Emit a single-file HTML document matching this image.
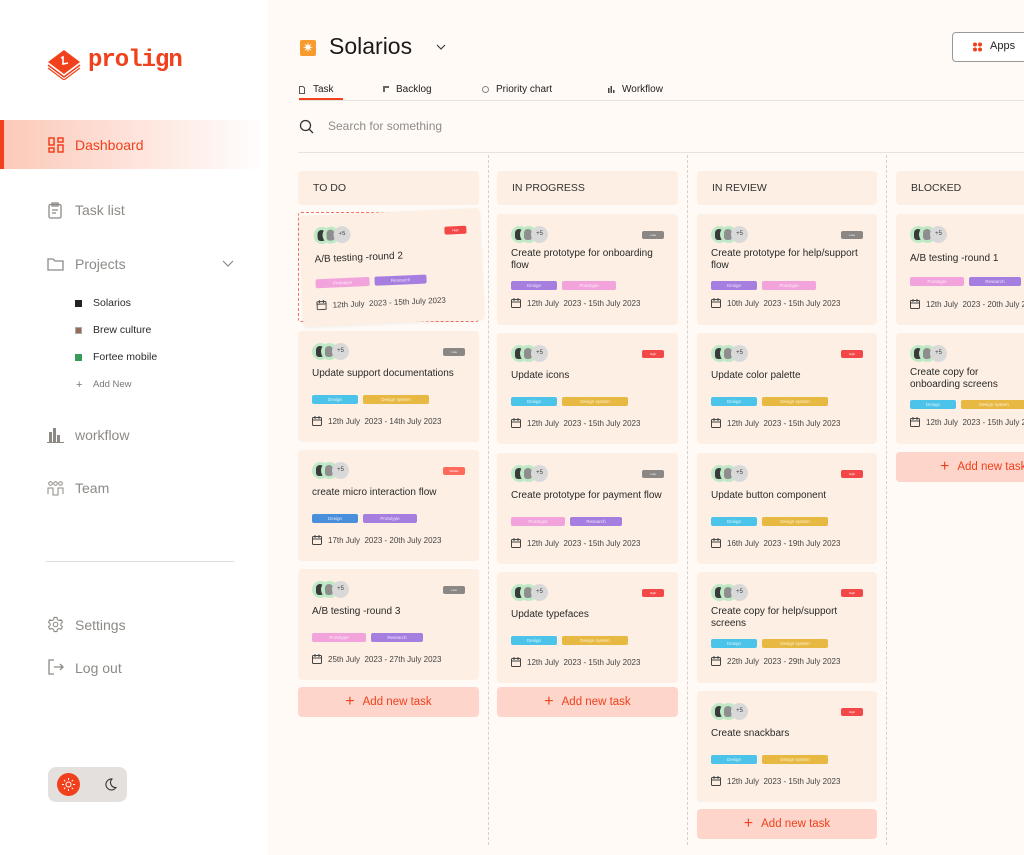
<!DOCTYPE html>
<html><head><meta charset="utf-8"><style>
*{margin:0;padding:0;box-sizing:border-box}
body{width:1024px;height:855px;overflow:hidden;background:#fffaf6;font-family:"Liberation Sans",sans-serif;position:relative;color:#2a2a2a}
.sb{position:absolute;left:0;top:0;width:268px;height:855px;background:#fff}
.logo{position:absolute;left:46px;top:46px}
.logotxt{position:absolute;left:88px;top:47px;font:bold 24px "Liberation Mono",monospace;color:#f0411c;letter-spacing:-1px}
.dash{position:absolute;left:0;top:120px;width:268px;height:49px;background:linear-gradient(90deg,#fcc9b9,#fff 100%);border-left:4px solid #f0411c}
.nav{position:absolute;left:75px;font-size:14px;color:#8d8a86}
.ic{position:absolute}
.sub{position:absolute;left:93px;font-size:10.5px;color:#2a2a2a}
.sq{position:absolute;left:75px;width:7px;height:7px}
.col{position:absolute;top:171px;width:181px}
.hd{position:absolute;left:0;top:0;width:100%;height:34px;background:#fdefe3;border-radius:4px;font-size:10.5px;padding:11px 15px;color:#333}
.card{position:absolute;left:0;width:100%;height:111px;background:#fdefe3;border-radius:4px}
.av{position:absolute;left:14px;top:12px;height:17px;width:60px}
.av i{position:absolute;top:0;width:17px;height:17px;border-radius:50%;background:#bfe9c6}
.av i::after{content:"";position:absolute;left:4px;top:3px;width:8px;height:11px;border-radius:4px 4px 3px 3px;background:#3a3a3a}
.av i+i::after{background:#8e8e8e}
.av b{position:absolute;left:20px;top:0;width:17px;height:17px;border-radius:50%;background:#d9d9d9;font:normal 6px "Liberation Sans";line-height:17px;text-align:center;color:#444}
.bd{position:absolute;right:14px;top:17px;width:22px;height:8px;border-radius:2px;font-size:3px;line-height:8px;text-align:center;color:#fff;overflow:hidden}
.hi{background:#f44747}.lo{background:#8a8785}.mo{background:#ff6a5a}
.t{position:absolute;left:14px;right:14px;font-size:10px;color:#2a2a2a}
.c1 .t{top:36px;line-height:14px}
.c2 .t{top:34px;line-height:12px}
.tags{position:absolute;left:14px;height:9px;white-space:nowrap}
.c1 .tags{top:64px}.c2 .tags{top:67px}
.tg{display:inline-block;height:9px;border-radius:2px;margin-right:5px;font-size:4.5px;line-height:9px;text-align:center;color:rgba(255,255,255,.8);vertical-align:top}
.pk{background:#f2a3dc;width:54px}.pu{background:#a67ee0;width:52px}.bl{background:#4cc4e9;width:46px}.ye{background:#e8b942;width:66px}.db{background:#4a8fdc;width:46px}
.dt{position:absolute;left:14px;font-size:8px;color:#444;white-space:nowrap}
.c1 .dt{top:85px}.c2 .dt{top:84px}
.dt svg{vertical-align:-2px;margin-right:6px}
.add{position:absolute;left:0;width:100%;height:30px;background:#fdd5cb;border-radius:4px;color:#f0411c;font-size:11.5px;text-align:center;line-height:30px}
.add span{font-size:16px;margin-right:8px;vertical-align:-1px}
.vd{position:absolute;top:155px;height:690px;border-left:1px dashed #d6d0cc}
</style></head><body>
<div class="sb">
<svg class="logo" width="36" height="34" viewBox="0 0 36 34"><path d="M2 16 L18 4 L34 16 L18 28Z" fill="#f0411c"/><path d="M2 19 L18 31 L34 19" fill="none" stroke="#f0411c" stroke-width="1.5"/><path d="M2 22 L18 34 L34 22" fill="none" stroke="#f0411c" stroke-width="1.2"/><path d="M15 12 L17 11 L17 18 L22 17" fill="none" stroke="#fff" stroke-width="1.6"/></svg>
<div class="logotxt">prolign</div>
<div class="dash"></div>
<svg class="ic" style="left:48px;top:137px" width="16" height="16" viewBox="0 0 16 16" fill="none" stroke="#f0411c" stroke-width="1.5"><rect x="1" y="1" width="5" height="7"/><rect x="10" y="1" width="5" height="4"/><rect x="1" y="11" width="5" height="4"/><rect x="10" y="8" width="5" height="7"/></svg>
<div class="nav" style="top:137px;color:#f0411c">Dashboard</div>
<svg class="ic" style="left:48px;top:202px" width="14" height="17" viewBox="0 0 14 17" fill="none" stroke="#8d8a86" stroke-width="1.3"><rect x="1" y="2.5" width="12" height="13.5" rx="1.5"/><rect x="4" y="1" width="6" height="3"/><path d="M4 8h6M4 11h4"/></svg>
<div class="nav" style="top:202px">Task list</div>
<svg class="ic" style="left:47px;top:257px" width="17" height="14" viewBox="0 0 17 14" fill="none" stroke="#8d8a86" stroke-width="1.3"><path d="M1 2h5l2 2h8v9H1z"/></svg>
<div class="nav" style="top:256px">Projects</div>
<svg class="ic" style="left:222px;top:260px" width="12" height="7" viewBox="0 0 12 7" fill="none" stroke="#8d8a86" stroke-width="1.2"><path d="M1 1l5 5 5-5"/></svg>
<div class="sq" style="top:300px;background:#222"></div><div class="sub" style="top:297px">Solarios</div>
<div class="sq" style="top:327px;background:#9a6a5a;border:1px solid #aaa"></div><div class="sub" style="top:324px">Brew culture</div>
<div class="sq" style="top:354px;background:#3a9a5a"></div><div class="sub" style="top:351px">Fortee mobile</div>
<div class="sub" style="top:379px;left:76px;color:#777;font-size:11px">+</div><div class="sub" style="top:379px;color:#777;font-size:9.5px">Add New</div>
<svg class="ic" style="left:47px;top:427px" width="17" height="16" viewBox="0 0 17 16" fill="#8d8a86"><rect x="2" y="5" width="3" height="10"/><rect x="6" y="1" width="3" height="14"/><rect x="10" y="8" width="3" height="7"/><rect x="0" y="15" width="17" height="1"/></svg>
<div class="nav" style="top:427px">workflow</div>
<svg class="ic" style="left:47px;top:481px" width="17" height="15" viewBox="0 0 17 15" fill="none" stroke="#8d8a86" stroke-width="1"><circle cx="3.5" cy="2.5" r="1.8"/><circle cx="8.5" cy="2.5" r="1.8"/><circle cx="13.5" cy="2.5" r="1.8"/><path d="M1 13V7h5v7h5V7h5v6M6 14V8"/></svg>
<div class="nav" style="top:480px">Team</div>
<div style="position:absolute;left:46px;top:561px;width:188px;height:1px;background:#e2dedb"></div>
<svg class="ic" style="left:47px;top:616px" width="17" height="17" viewBox="0 0 24 24" fill="none" stroke="#8d8a86" stroke-width="1.5"><circle cx="12" cy="12" r="3.2"/><path d="M10 2h4l.6 3 2.4 1.4 2.9-1 2 3.4-2.3 2v2.4l2.3 2-2 3.4-2.9-1L14.6 19 14 22h-4l-.6-3-2.4-1.4-2.9 1-2-3.4 2.3-2v-2.4l-2.3-2 2-3.4 2.9 1L9.4 5z"/></svg>
<div class="nav" style="top:617px">Settings</div>
<svg class="ic" style="left:48px;top:659px" width="16" height="16" viewBox="0 0 16 16" fill="none" stroke="#8d8a86" stroke-width="1.3"><path d="M6 1H1v14h5M6 8h9M12 5l3 3-3 3"/></svg>
<div class="nav" style="top:660px">Log out</div>
<div style="position:absolute;left:48px;top:767px;width:79px;height:35px;border-radius:8px;background:#e4e0dd"></div>
<div style="position:absolute;left:57px;top:773px;width:23px;height:23px;border-radius:50%;background:#f0411c"></div>
<svg class="ic" style="left:61px;top:777px" width="15" height="15" viewBox="0 0 15 15" fill="none" stroke="#fff" stroke-width="1"><circle cx="7.5" cy="7.5" r="2.5"/><path d="M7.5 1v2M7.5 12v2M1 7.5h2M12 7.5h2M3 3l1.3 1.3M10.7 10.7L12 12M3 12l1.3-1.3M10.7 4.3L12 3"/></svg>
<svg class="ic" style="left:104px;top:778px" width="13" height="13" viewBox="0 0 13 13" fill="none" stroke="#333" stroke-width="1.1"><path d="M8 1a5.5 5.5 0 1 0 4 8.5A5 5 0 0 1 8 1z"/></svg>
</div>

<div style="position:absolute;left:300px;top:40px;width:16px;height:16px;background:#f89b2e;border-radius:2px;color:#fff;font-size:13px;line-height:16px;text-align:center">✷</div>
<div style="position:absolute;left:329px;top:33px;font-size:23px;color:#1a1a1a">Solarios</div>
<svg class="ic" style="left:436px;top:44px" width="10" height="6" viewBox="0 0 10 6" fill="none" stroke="#333" stroke-width="1.1"><path d="M1 1l4 4 4-4"/></svg>
<div style="position:absolute;left:952px;top:32px;width:90px;height:30px;border:1px solid #999;border-radius:4px;background:#fff"></div>
<svg class="ic" style="left:973px;top:42px" width="9" height="10" viewBox="0 0 9 10" fill="#f0411c"><circle cx="2" cy="2.5" r="2"/><circle cx="7" cy="2.5" r="2"/><circle cx="2" cy="7.5" r="2"/><circle cx="7" cy="7.5" r="2"/></svg>
<div style="position:absolute;left:990px;top:40px;font-size:11px;color:#222">Apps</div>
<div style="position:absolute;left:298px;top:100px;width:726px;height:1px;background:#e6e2df"></div>
<div style="position:absolute;left:299px;top:98px;width:44px;height:2px;background:#f0411c"></div>
<svg class="ic" style="left:299px;top:86px" width="6" height="8" viewBox="0 0 6 8" fill="none" stroke="#555" stroke-width="1"><path d="M.5.5h3.5l1.5 1.5v5.5h-5z"/></svg>
<div style="position:absolute;left:313px;top:84px;font-size:10px;color:#222">Task</div>
<div style="position:absolute;left:383px;top:86px;width:6px;height:6px;border-left:2px solid #666;border-top:2px solid #666"></div>
<div style="position:absolute;left:396px;top:84px;font-size:10px;color:#222">Backlog</div>
<div style="position:absolute;left:482px;top:86px;width:7px;height:7px;border:1.5px solid #888;border-radius:50%"></div>
<div style="position:absolute;left:496px;top:84px;font-size:10px;color:#222">Priority chart</div>
<svg class="ic" style="left:608px;top:86px" width="7" height="7" viewBox="0 0 7 7" fill="#444"><rect x="0" y="2" width="1.5" height="5"/><rect x="2.5" y="0" width="1.5" height="7"/><rect x="5" y="4" width="1.5" height="3"/></svg>
<div style="position:absolute;left:622px;top:84px;font-size:10px;color:#222">Workflow</div>
<svg class="ic" style="left:299px;top:119px" width="15" height="15" viewBox="0 0 15 15" fill="none" stroke="#333" stroke-width="1.3"><circle cx="6.5" cy="6.5" r="5"/><path d="M10 10l4 4"/></svg>
<div style="position:absolute;left:328px;top:119px;font-size:12px;color:#8f8c89">Search for something</div>
<div style="position:absolute;left:298px;top:152px;width:726px;height:1px;background:#e6e2df"></div>
<div class="vd" style="left:488px"></div><div class="vd" style="left:687px"></div><div class="vd" style="left:886px"></div>

<div class="col" style="left:298px">
<div class="hd">TO DO</div>
<div style="position:absolute;left:0;top:41px;width:181px;height:110px;border:1.5px dashed #f47060;border-radius:3px"></div>
<div class="card c1" style="top:41px;left:3px;transform:rotate(-2.5deg);box-shadow:0 1px 3px rgba(0,0,0,.06)"><div class="av"><i style="left:0"></i><i style="left:9px"></i><b style="left:20px">+5</b></div><span class="bd hi">High</span><div class="t" style="top:38px">A/B testing -round 2</div><div class="tags"><span class="tg pk">Prototype</span><span class="tg pu">Research</span></div><div class="dt"><svg width="10" height="10" viewBox="0 0 10 10" fill="none" stroke="#444"><rect x=".5" y="1.5" width="9" height="8" rx="1"/><path d="M.5 4h9M3 0v3M7 0v3"/></svg>12th July&nbsp; 2023 - 15th July 2023</div></div>
<div class="card c1" style="top:160px"><div class="av"><i style="left:0"></i><i style="left:9px"></i><b style="left:20px">+5</b></div><span class="bd lo">Low</span><div class="t">Update support documentations</div><div class="tags"><span class="tg bl">Design</span><span class="tg ye">Design system</span></div><div class="dt"><svg width="10" height="10" viewBox="0 0 10 10" fill="none" stroke="#444"><rect x=".5" y="1.5" width="9" height="8" rx="1"/><path d="M.5 4h9M3 0v3M7 0v3"/></svg>12th July&nbsp; 2023 - 14th July 2023</div></div>
<div class="card c1" style="top:279px"><div class="av"><i style="left:0"></i><i style="left:9px"></i><b style="left:20px">+5</b></div><span class="bd mo">Mobile</span><div class="t">create micro interaction flow</div><div class="tags"><span class="tg db">Design</span><span class="tg pu" style="width:54px">Prototype</span></div><div class="dt"><svg width="10" height="10" viewBox="0 0 10 10" fill="none" stroke="#444"><rect x=".5" y="1.5" width="9" height="8" rx="1"/><path d="M.5 4h9M3 0v3M7 0v3"/></svg>17th July&nbsp; 2023 - 20th July 2023</div></div>
<div class="card c1" style="top:398px"><div class="av"><i style="left:0"></i><i style="left:9px"></i><b style="left:20px">+5</b></div><span class="bd lo">Low</span><div class="t">A/B testing -round 3</div><div class="tags"><span class="tg pk">Prototype</span><span class="tg pu">Research</span></div><div class="dt"><svg width="10" height="10" viewBox="0 0 10 10" fill="none" stroke="#444"><rect x=".5" y="1.5" width="9" height="8" rx="1"/><path d="M.5 4h9M3 0v3M7 0v3"/></svg>25th July&nbsp; 2023 - 27th July 2023</div></div>
<div class="add" style="top:516px"><span>+</span>Add new task</div>
</div>

<div class="col" style="left:497px">
<div class="hd">IN PROGRESS</div>
<div class="card c2" style="top:43px"><div class="av"><i style="left:0"></i><i style="left:9px"></i><b style="left:20px">+5</b></div><span class="bd lo">Low</span><div class="t">Create prototype for onboarding flow</div><div class="tags"><span class="tg pu" style="width:46px">Design</span><span class="tg pk">Prototype</span></div><div class="dt"><svg width="10" height="10" viewBox="0 0 10 10" fill="none" stroke="#444"><rect x=".5" y="1.5" width="9" height="8" rx="1"/><path d="M.5 4h9M3 0v3M7 0v3"/></svg>12th July&nbsp; 2023 - 15th July 2023</div></div>
<div class="card c1" style="top:162px"><div class="av"><i style="left:0"></i><i style="left:9px"></i><b style="left:20px">+5</b></div><span class="bd hi">High</span><div class="t">Update icons</div><div class="tags"><span class="tg bl">Design</span><span class="tg ye">Design system</span></div><div class="dt"><svg width="10" height="10" viewBox="0 0 10 10" fill="none" stroke="#444"><rect x=".5" y="1.5" width="9" height="8" rx="1"/><path d="M.5 4h9M3 0v3M7 0v3"/></svg>12th July&nbsp; 2023 - 15th July 2023</div></div>
<div class="card c1" style="top:282px"><div class="av"><i style="left:0"></i><i style="left:9px"></i><b style="left:20px">+5</b></div><span class="bd lo">Low</span><div class="t">Create prototype for payment flow</div><div class="tags"><span class="tg pk">Prototype</span><span class="tg pu">Research</span></div><div class="dt"><svg width="10" height="10" viewBox="0 0 10 10" fill="none" stroke="#444"><rect x=".5" y="1.5" width="9" height="8" rx="1"/><path d="M.5 4h9M3 0v3M7 0v3"/></svg>12th July&nbsp; 2023 - 15th July 2023</div></div>
<div class="card c1" style="top:401px"><div class="av"><i style="left:0"></i><i style="left:9px"></i><b style="left:20px">+5</b></div><span class="bd hi">High</span><div class="t">Update typefaces</div><div class="tags"><span class="tg bl">Design</span><span class="tg ye">Design system</span></div><div class="dt"><svg width="10" height="10" viewBox="0 0 10 10" fill="none" stroke="#444"><rect x=".5" y="1.5" width="9" height="8" rx="1"/><path d="M.5 4h9M3 0v3M7 0v3"/></svg>12th July&nbsp; 2023 - 15th July 2023</div></div>
<div class="add" style="top:516px"><span>+</span>Add new task</div>
</div>

<div class="col" style="left:697px;width:180px">
<div class="hd">IN REVIEW</div>
<div class="card c2" style="top:43px"><div class="av"><i style="left:0"></i><i style="left:9px"></i><b style="left:20px">+5</b></div><span class="bd lo">Low</span><div class="t">Create prototype for help/support flow</div><div class="tags"><span class="tg pu" style="width:46px">Design</span><span class="tg pk">Prototype</span></div><div class="dt"><svg width="10" height="10" viewBox="0 0 10 10" fill="none" stroke="#444"><rect x=".5" y="1.5" width="9" height="8" rx="1"/><path d="M.5 4h9M3 0v3M7 0v3"/></svg>10th July&nbsp; 2023 - 15th July 2023</div></div>
<div class="card c1" style="top:162px"><div class="av"><i style="left:0"></i><i style="left:9px"></i><b style="left:20px">+5</b></div><span class="bd hi">High</span><div class="t">Update color palette</div><div class="tags"><span class="tg bl">Design</span><span class="tg ye">Design system</span></div><div class="dt"><svg width="10" height="10" viewBox="0 0 10 10" fill="none" stroke="#444"><rect x=".5" y="1.5" width="9" height="8" rx="1"/><path d="M.5 4h9M3 0v3M7 0v3"/></svg>12th July&nbsp; 2023 - 15th July 2023</div></div>
<div class="card c1" style="top:282px"><div class="av"><i style="left:0"></i><i style="left:9px"></i><b style="left:20px">+5</b></div><span class="bd hi">High</span><div class="t">Update button component</div><div class="tags"><span class="tg bl">Design</span><span class="tg ye">Design system</span></div><div class="dt"><svg width="10" height="10" viewBox="0 0 10 10" fill="none" stroke="#444"><rect x=".5" y="1.5" width="9" height="8" rx="1"/><path d="M.5 4h9M3 0v3M7 0v3"/></svg>16th July&nbsp; 2023 - 19th July 2023</div></div>
<div class="card c2" style="top:401px"><div class="av"><i style="left:0"></i><i style="left:9px"></i><b style="left:20px">+5</b></div><span class="bd hi">High</span><div class="t">Create copy for help/support screens</div><div class="tags"><span class="tg bl">Design</span><span class="tg ye">Design system</span></div><div class="dt"><svg width="10" height="10" viewBox="0 0 10 10" fill="none" stroke="#444"><rect x=".5" y="1.5" width="9" height="8" rx="1"/><path d="M.5 4h9M3 0v3M7 0v3"/></svg>22th July&nbsp; 2023 - 29th July 2023</div></div>
<div class="card c1" style="top:520px"><div class="av"><i style="left:0"></i><i style="left:9px"></i><b style="left:20px">+5</b></div><span class="bd hi">High</span><div class="t">Create snackbars</div><div class="tags"><span class="tg bl">Design</span><span class="tg ye">Design system</span></div><div class="dt"><svg width="10" height="10" viewBox="0 0 10 10" fill="none" stroke="#444"><rect x=".5" y="1.5" width="9" height="8" rx="1"/><path d="M.5 4h9M3 0v3M7 0v3"/></svg>12th July&nbsp; 2023 - 15th July 2023</div></div>
<div class="add" style="top:638px"><span>+</span>Add new task</div>
</div>

<div class="col" style="left:896px">
<div class="hd">BLOCKED</div>
<div class="card c1" style="top:43px"><div class="av"><i style="left:0"></i><i style="left:9px"></i><b style="left:20px">+5</b></div><div class="t" style="top:38px">A/B testing -round 1</div><div class="tags" style="top:63px"><span class="tg pk">Prototype</span><span class="tg pu">Research</span></div><div class="dt"><svg width="10" height="10" viewBox="0 0 10 10" fill="none" stroke="#444"><rect x=".5" y="1.5" width="9" height="8" rx="1"/><path d="M.5 4h9M3 0v3M7 0v3"/></svg>12th July&nbsp; 2023 - 20th July 2023</div></div>
<div class="card c2" style="top:162px"><div class="av"><i style="left:0"></i><i style="left:9px"></i><b style="left:20px">+5</b></div><div class="t" style="right:auto;width:110px">Create copy for onboarding screens</div><div class="tags"><span class="tg bl">Design</span><span class="tg ye">Design system</span></div><div class="dt"><svg width="10" height="10" viewBox="0 0 10 10" fill="none" stroke="#444"><rect x=".5" y="1.5" width="9" height="8" rx="1"/><path d="M.5 4h9M3 0v3M7 0v3"/></svg>12th July&nbsp; 2023 - 15th July 2023</div></div>
<div class="add" style="top:281px;text-align:left;padding-left:44px"><span>+</span>Add new task</div>
</div>
</body></html>
